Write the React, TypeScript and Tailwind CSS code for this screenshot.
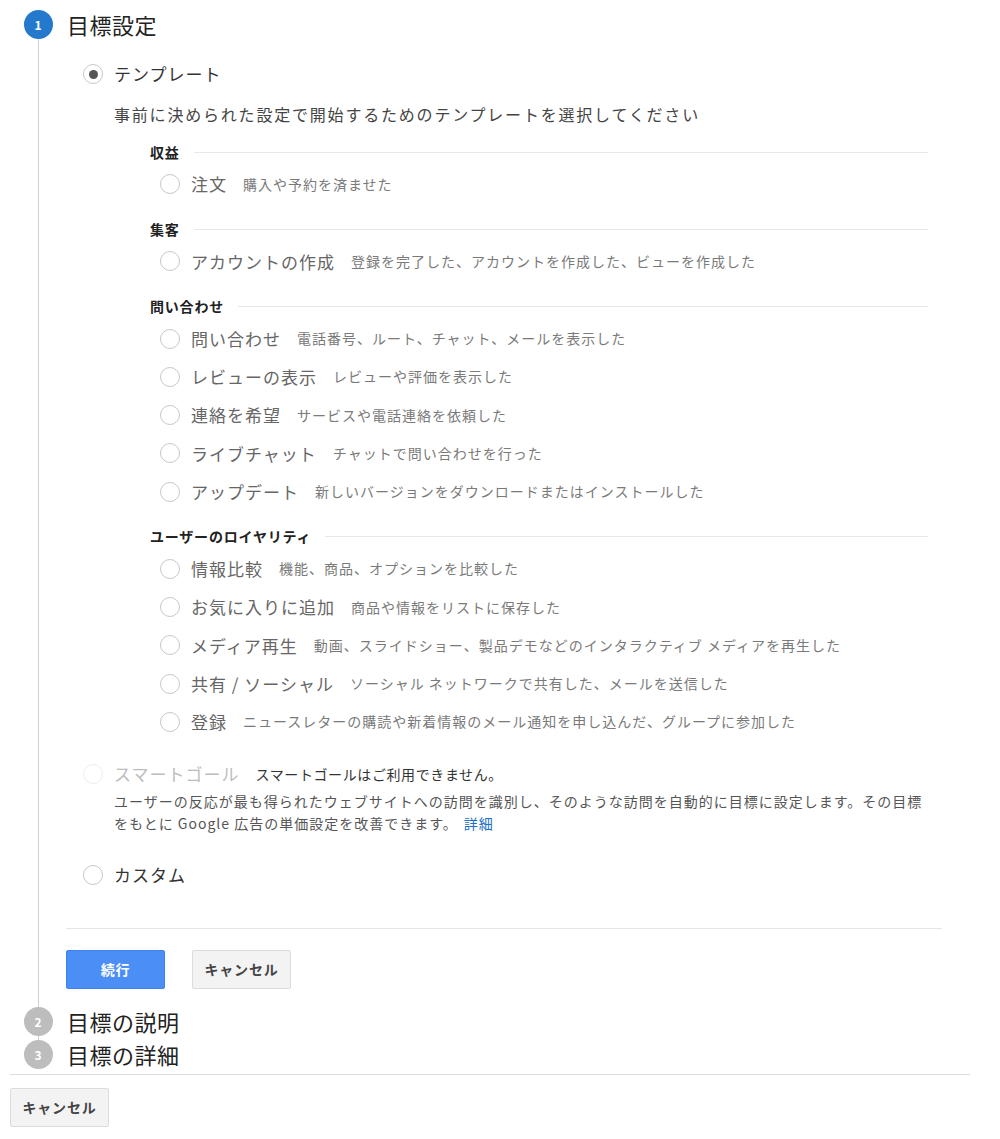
import React from "react"

const font = { fontFamily: '"Noto Sans CJK JP", "Noto Sans", sans-serif' }

type Item = { label: string; desc: string }

const sections: { title: string; items: Item[] }[] = [
  { title: "収益", items: [{ label: "注文", desc: "購入や予約を済ませた" }] },
  {
    title: "集客",
    items: [{ label: "アカウントの作成", desc: "登録を完了した、アカウントを作成した、ビューを作成した" }],
  },
  {
    title: "問い合わせ",
    items: [
      { label: "問い合わせ", desc: "電話番号、ルート、チャット、メールを表示した" },
      { label: "レビューの表示", desc: "レビューや評価を表示した" },
      { label: "連絡を希望", desc: "サービスや電話連絡を依頼した" },
      { label: "ライブチャット", desc: "チャットで問い合わせを行った" },
      { label: "アップデート", desc: "新しいバージョンをダウンロードまたはインストールした" },
    ],
  },
  {
    title: "ユーザーのロイヤリティ",
    items: [
      { label: "情報比較", desc: "機能、商品、オプションを比較した" },
      { label: "お気に入りに追加", desc: "商品や情報をリストに保存した" },
      { label: "メディア再生", desc: "動画、スライドショー、製品デモなどのインタラクティブ メディアを再生した" },
      { label: "共有 / ソーシャル", desc: "ソーシャル ネットワークで共有した、メールを送信した" },
      { label: "登録", desc: "ニュースレターの購読や新着情報のメール通知を申し込んだ、グループに参加した" },
    ],
  },
]

function Radio({ checked = false, faint = false }: { checked?: boolean; faint?: boolean }) {
  return (
    <span
      className={`flex h-[20px] w-[20px] shrink-0 items-center justify-center rounded-full border ${
        faint ? "border-[#ededed]" : "border-[#c8c8c8]"
      } bg-white`}
    >
      {checked && <span className="h-[9px] w-[9px] rounded-full bg-[#555]" />}
    </span>
  )
}

function StepCircle({ n, active }: { n: number; active?: boolean }) {
  return (
    <span
      className={`flex h-[29px] w-[29px] shrink-0 items-center justify-center rounded-full text-[12px] font-bold text-white ${
        active ? "bg-[#2479cc]" : "bg-[#bdbdbd]"
      }`}
    >
      {n}
    </span>
  )
}

function Section({ title, items }: { title: string; items: Item[] }) {
  return (
    <div className="pl-[36px]">
      <div className="flex h-[20px] items-center gap-[14px]">
        <span className="text-[14px] font-bold tracking-[0.8px] text-[#222]">{title}</span>
        <span className="h-px flex-1 bg-[#e8e8e8]" />
      </div>
      <div className="mt-[3px] pl-[10px]">
        {items.map((it) => (
          <div key={it.label} className="flex h-[38.25px] items-center">
            <Radio />
            <span className="ml-[11px] text-[17px] tracking-[1px] text-[#666]">{it.label}</span>
            <span className="ml-[16px] text-[14px] tracking-[1px] text-[#7a7a7a]">{it.desc}</span>
          </div>
        ))}
      </div>
    </div>
  )
}

function Button({ children, primary }: { children: React.ReactNode; primary?: boolean }) {
  return (
    <button
      className={`flex h-[39px] w-[99px] items-center justify-center rounded-[2px] border text-[14px] font-bold tracking-[0.8px] ${
        primary
          ? "border-[#3d82f0] bg-[#4b8ef5] text-white"
          : "border-[#dcdcdc] bg-[#f3f3f3] text-[#444]"
      }`}
    >
      {children}
    </button>
  )
}

export default function App() {
  return (
    <div className="w-[1000px] bg-white pl-[10px] pt-[10px]" style={font}>
      <div className="w-[960px]">
        {/* step 1 */}
        <div className="flex">
          <div className="flex w-[56px] flex-col items-center">
            <StepCircle n={1} active />
            <span className="w-px flex-1 bg-[#cfcfcf]" />
          </div>
          <div className="w-[876px]">
            <div className="flex h-[29px] items-center pl-[1px] text-[22px] tracking-[0.5px] text-[#222]">
              目標設定
            </div>

            <div className="pl-[17px]">
              <div className="mt-[23px] flex h-[24px] items-center">
                <Radio checked />
                <span className="ml-[11px] text-[17px] tracking-[1px] text-[#333]">テンプレート</span>
              </div>
              <div className="pl-[31px]">
                <p className="mt-[16px] text-[16px] leading-[24px] tracking-[1.8px] text-[#444]">
                  事前に決められた設定で開始するためのテンプレートを選択してください
                </p>
                <div className="mt-[16px] flex flex-col gap-[16px] pr-[14px]">
                  {sections.map((s) => (
                    <Section key={s.title} title={s.title} items={s.items} />
                  ))}
                </div>
              </div>

              <div className="mt-[21px] flex h-[24px] items-center">
                <Radio faint />
                <span className="ml-[11px] text-[17px] tracking-[1px] text-[#bdbdbd]">スマートゴール</span>
                <span className="ml-[16px] text-[14px] tracking-[0.6px] text-[#333]">
                  スマートゴールはご利用できません。
                </span>
              </div>
              <p className="mt-[4px] pl-[31px] text-[14px] leading-[22px] tracking-[1px] text-[#555]">
                ユーザーの反応が最も得られたウェブサイトへの訪問を識別し、そのような訪問を自動的に目標に設定します。その目標
                <br />
                をもとに Google 広告の単価設定を改善できます。<a className="ml-[6px] text-[#1a6fc8]">詳細</a>
              </p>

              <div className="mt-[29px] flex h-[24px] items-center">
                <Radio />
                <span className="ml-[11px] text-[17px] tracking-[1px] text-[#333]">カスタム</span>
              </div>
            </div>

            <div className="mt-[41px] h-px bg-[#e5e5e5]" />

            <div className="mt-[21px] flex gap-[27px] pb-[18px]">
              <Button primary>続行</Button>
              <Button>キャンセル</Button>
            </div>
          </div>
        </div>

        {/* step 2 */}
        <div className="flex h-[33px]">
          <div className="flex w-[56px] flex-col items-center">
            <StepCircle n={2} />
            <span className="w-px flex-1 bg-[#cfcfcf]" />
          </div>
          <div className="flex h-[29px] items-center pl-[1px] text-[22px] tracking-[0.5px] text-[#222]">
            目標の説明
          </div>
        </div>

        {/* step 3 */}
        <div className="flex">
          <div className="flex w-[56px] flex-col items-center">
            <StepCircle n={3} />
          </div>
          <div className="flex h-[29px] items-center pl-[1px] text-[22px] tracking-[0.5px] text-[#222]">
            目標の詳細
          </div>
        </div>

        <div className="mt-[5px] h-px bg-[#dcdcdc]" />
        <div className="mt-[13px] pb-[11px]">
          <Button>キャンセル</Button>
        </div>
      </div>
    </div>
  )
}
